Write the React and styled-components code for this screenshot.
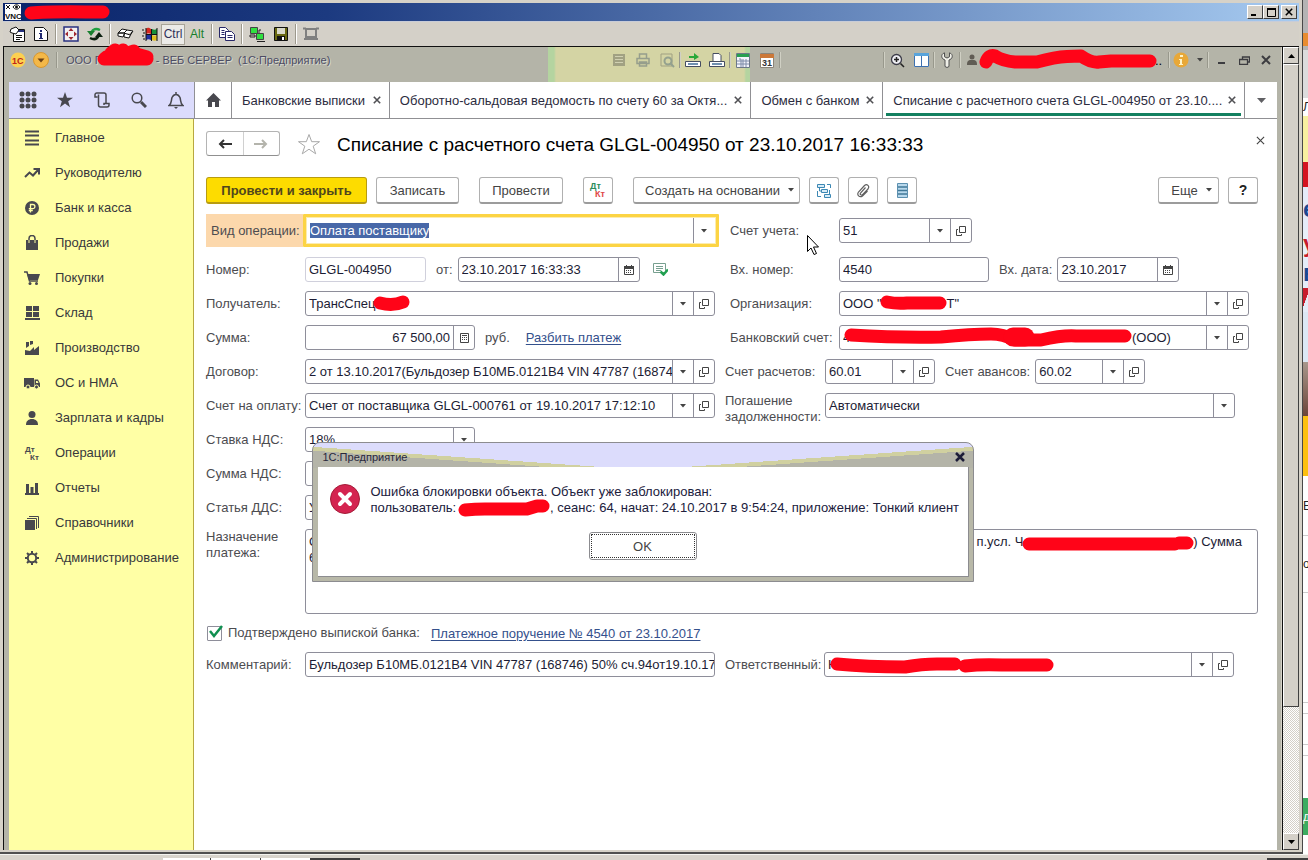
import { useEffect, useRef } from 'react';
import styled, { createGlobalStyle, css } from 'styled-components';

// Estilos globales de la página.
const GlobalStyle = createGlobalStyle`
  * { box-sizing: border-box; }
  body { margin: 0; background: #d4d0c8; }
  body, button, input, select, textarea {
    font-family: "Liberation Sans", Arial, sans-serif;
    font-size: 13px;
  }
  button { padding: 0; cursor: pointer; }
`;

/* ---------- Escritorio y ventana VNC ---------- */

const Desktop = styled.div`
  display: flex;
  flex-direction: column;
  min-height: 100vh;
`;

const DesktopRow = styled.div`
  display: flex;
  flex: 1;
`;

const VncWindow = styled.div`
  flex: 1;
  min-width: 0;
  display: flex;
  flex-direction: column;
  padding: 3px 3px 2px;
  background: #d6d2c8;
  border-right: 1px solid #484848;
  border-bottom: 2px solid #505050;
`;

const VncTitle = styled.div`
  display: flex;
  align-items: center;
  height: 19px;
  padding: 0 2px;
  background: linear-gradient(90deg, #0a246a, #1c3a80 25%, #a6caf0);
  border-bottom: 1px solid #c8ccd8;
`;

const Spacer = styled.div`
  flex: 1;
`;

const ClassicButton = styled.button`
  display: flex;
  align-items: center;
  justify-content: center;
  width: 16px;
  height: 14px;
  margin-left: ${({ $gap }) => ($gap ? '2px' : '0')};
  background: #d4d0c8;
  border: 1px solid;
  border-color: #fff #404040 #404040 #fff;
`;

const VncToolbar = styled.div`
  display: flex;
  align-items: center;
  height: 24px;
  padding-left: 2px;
  background: #d4d0c8;
`;

const VncTool = styled.button`
  display: flex;
  align-items: center;
  justify-content: center;
  width: 24px;
  height: 22px;
  border: 0;
  background: none;
`;

const VncKey = styled.button`
  width: 24px;
  height: 21px;
  font-size: 12px;
  color: ${({ $pressed }) => ($pressed ? '#303058' : '#18802c')};
  background: ${({ $pressed }) => ($pressed ? '#ecebe8' : 'none')};
  border: 1px solid ${({ $pressed }) => ($pressed ? '#a8a498' : 'transparent')};
`;

const VncDivider = styled.span`
  width: 2px;
  height: 20px;
  margin: 0 2px;
  border-left: 1px solid #9c988c;
  border-right: 1px solid #fff;
`;

const VncBody = styled.div`
  flex: 1;
  display: flex;
  border-top: 1px solid #101010;
  border-left: 1px solid #101010;
`;

/* ---------- Ventana 1C ---------- */

const OneC = styled.div`
  position: relative;
  flex: 1;
  min-width: 0;
  display: flex;
  flex-direction: column;
  padding: 0 4px 0 5px;
  background: #b4b4a8;
`;

const OneCTitle = styled.header`
  display: flex;
  align-items: flex-start;
  height: 35px;
  margin-right: -4px;
`;

const TitleLeft = styled.div`
  position: relative;
  display: flex;
  align-items: center;
  height: 26px;
  gap: 7px;
  padding-left: 1px;
`;

const RoundButton = styled.button`
  width: 16px;
  height: 16px;
  border: 0;
  background: none;
`;

const TitleText = styled.span`
  margin-left: 1px;
  font-size: 11px;
  color: #4c4c64;
  white-space: pre;
  text-shadow: 1px 1px 0 #d8d8d0;
`;

const TitleTools = styled.div`
  position: relative;
  display: flex;
  align-items: center;
  width: 733px;
  height: 35px;
  padding: 0 0 9px 59px;
  background: linear-gradient(90deg, #b4d4a0 0 6px, #d4d4a4 8px 196px, #b4d4a0 198px 202px, #b4b4a8 202px);
`;

const TitleTool = styled.button`
  display: flex;
  align-items: center;
  justify-content: center;
  width: ${({ $wide }) => ($wide ? '24px' : '22px')};
  height: 22px;
  border: 0;
  background: none;
  opacity: ${({ $faded }) => ($faded ? 0.35 : 1)};
`;

const TitleDivider = styled.span`
  width: 2px;
  height: 16px;
  border-left: 1px solid #98988c;
  border-right: 1px solid #d0d0c4;
`;

const Blank = styled.span`
  width: ${({ $w }) => $w}px;
`;

const TopRow = styled.div`
  display: flex;
  height: 37px;
  background: #fff;
  border-bottom: 1px solid #909094;
`;

const QuickPanel = styled.div`
  display: flex;
  width: 185px;
  background: #dcdcfc;
`;

const QuickButton = styled.button`
  display: flex;
  align-items: center;
  justify-content: center;
  width: 37px;
  border: 0;
  background: none;
`;

const Tabs = styled.nav`
  flex: 1;
  min-width: 0;
  display: flex;
  border-left: 1px solid #909094;
`;

const Tab = styled.div`
  position: relative;
  flex: 0 1 ${({ $w }) => $w}px;
  min-width: 0;
  display: flex;
  align-items: center;
  padding: 0 6px 0 10px;
  border-right: 1px solid #909094;
  ${({ $active }) =>
    $active &&
    css`
      box-shadow: inset 3px 0 #fff, inset -3px 0 #fff, inset 0 -2px #fff, inset 0 -5px #138060;
    `}
`;

const TabName = styled.button`
  flex: 1;
  min-width: 0;
  overflow: hidden;
  white-space: nowrap;
  text-align: left;
  color: #2c2c40;
  border: 0;
  background: none;
`;

const TabIcon = styled.button`
  display: flex;
  align-items: center;
  justify-content: center;
  flex: 0 0 ${({ $w }) => $w || 12}px;
  border: 0;
  background: none;
`;

const Work = styled.div`
  flex: 1;
  display: flex;
`;

const Sidebar = styled.nav`
  flex: 0 0 185px;
  padding-top: 1px;
  background: #ffffa5;
  border-right: 1px solid #b8a840;
`;

const SideLink = styled.a`
  display: flex;
  align-items: center;
  gap: 13px;
  height: 35px;
  padding-left: 15px;
  color: #38383c;
  text-decoration: none;
`;

const Main = styled.main`
  flex: 1;
  min-width: 0;
  padding: 12px 19px 0 12px;
  background: #fff;
`;

/* ---------- Encabezado y botones del documento ---------- */

const Heading = styled.div`
  display: flex;
  align-items: center;
  height: 25px;
  margin-bottom: 21px;
`;

const NavPair = styled.div`
  display: flex;
  width: 74px;
  height: 25px;
  border: 1px solid #b4b4b4;
  border-bottom-color: #909090;
  border-radius: 3px;
`;

const NavButton = styled.button`
  flex: 1;
  display: flex;
  align-items: center;
  justify-content: center;
  border: 0;
  background: none;
  & + & { border-left: 1px solid #d0d0d0; }
`;

const StarButton = styled.button`
  display: flex;
  margin: 0 16px 0 17px;
  border: 0;
  background: none;
`;

const Title = styled.h1`
  flex: 1;
  margin: 2px 0 0;
  font-size: 19px;
  font-weight: 400;
  line-height: 22px;
  color: #000;
  white-space: nowrap;
`;

const CloseForm = styled.button`
  display: flex;
  width: 9px;
  margin: 0 -7px 6px 0;
  border: 0;
  background: none;
`;

const Actions = styled.div`
  display: flex;
  gap: 9px;
  margin-bottom: 10px;
`;

const Action = styled.button`
  display: flex;
  align-items: center;
  justify-content: center;
  gap: 8px;
  width: ${({ $w }) => $w}px;
  height: 27px;
  margin-right: ${({ $apart }) => ($apart ? '11px' : '0')};
  padding-left: ${({ $menu }) => ($menu ? '6px' : '0')};
  color: #444;
  white-space: nowrap;
  background: #fff;
  border: 1px solid #b0b0b0;
  border-bottom: 2px solid #9c9c9c;
  border-radius: 3px;
  ${({ $primary }) =>
    $primary &&
    css`
      font-weight: 700;
      color: #50461c;
      background: #fddc00;
      border-color: #b89c10;
    `}
`;

const HelpAction = styled(Action)`
  font-weight: 700;
  font-size: 14px;
  color: #222;
`;

/* ---------- Formulario ---------- */

const Columns = styled.div`
  display: grid;
  grid-template-columns: minmax(0, 509fr) minmax(0, 543fr);
`;

const Column = styled.div`
  display: flex;
  flex-direction: column;
  gap: 9px;
  padding-left: ${({ $right }) => ($right ? '10px' : '0')};
`;

const Row = styled.div`
  display: flex;
  align-items: ${({ $top }) => ($top ? 'flex-start' : 'center')};
  height: ${({ $tall }) => ($tall ? '34px' : '25px')};
  padding-left: ${({ $inset }) => ($inset ? '5px' : '0')};
  ${({ $tall }) => $tall && 'padding-bottom: 1px;'}
`;

const Label = styled.label`
  flex: 0 0 ${({ $w }) => $w || 99}px;
  color: #4c4c50;
  line-height: 16px;
  white-space: nowrap;
`;

const HotLabel = styled(Label)`
  flex-basis: 97px;
  height: 33px;
  padding-left: 5px;
  line-height: 33px;
  background: #fcd8ac;
`;

const InlineLabel = styled(Label)`
  flex: 0 0 auto;
  margin: 0 5px 0 10px;
`;

const Box = styled.div`
  position: relative;
  flex: 0 1 ${({ $w }) => $w || 410}px;
  min-width: 0;
  display: flex;
  height: 25px;
  background: #fff;
  border: 1px solid ${({ $soft }) => ($soft ? '#d0d0dc' : '#8e8e9a')};
  border-radius: 3px;
`;

const FocusBox = styled(Box)`
  flex: 1 0 auto;
  height: 33px;
  margin-right: -4px;
  padding: 1px 2px 1px 1px;
  border: 3px solid #fcd444;
  border-radius: 1px;
  box-shadow: inset 0 0 0 1px #fcecb0;
`;

const Input = styled.input`
  flex: 1;
  width: 0;
  min-width: 0;
  padding: ${({ $right }) => ($right ? '0 3px' : '0 0 0 3px')};
  color: #1c1c34;
  text-align: ${({ $right }) => ($right ? 'right' : 'left')};
  border: 0;
  outline: 0;
  background: none;
  &::selection { color: #fff; background: #4868a8; }
`;

const Select = styled.select`
  flex: 1;
  min-width: 0;
  padding: 0 3px;
  color: #1c1c34;
  border: 0;
  outline: 0;
  appearance: none;
  background: none;
`;

const Side = styled.button`
  flex: 0 0 21px;
  display: flex;
  align-items: center;
  justify-content: center;
  border: 0;
  border-left: 1px solid #8e8e9a;
  background: none;
`;

const Units = styled.span`
  margin: 0 16px 0 10px;
  color: #4c4c50;
`;

const Link = styled.a`
  color: #34508c;
  text-decoration: underline;
  text-underline-offset: 2px;
  white-space: nowrap;
`;

const PlainIcon = styled.button`
  display: flex;
  margin-left: 13px;
  border: 0;
  background: none;
`;

const Purpose = styled.div`
  position: relative;
  display: flex;
  align-items: flex-start;
  margin-top: 9px;
`;

const PurposeLabel = styled(Label)`
  white-space: normal;
`;

const TextArea = styled.textarea`
  flex: 1;
  min-width: 0;
  height: 85px;
  padding: 4px 3px;
  line-height: 16px;
  color: #1c1c34;
  white-space: pre;
  overflow: hidden;
  resize: none;
  border: 1px solid #8e8e9a;
  border-radius: 3px;
  outline: 0;
`;

const Confirm = styled.div`
  display: flex;
  align-items: center;
  height: 16px;
  margin: 11px 0;
`;

const CheckBox = styled.input`
  flex: 0 0 15px;
  height: 15px;
  margin: 0 6px 0 1px;
  appearance: none;
  background: #fff;
  border: 1px solid #8e8e9a;
  border-radius: 1px;
`;

const CheckHost = styled.span`
  position: relative;
  display: flex;
  svg { position: absolute; left: 2px; top: -2px; pointer-events: none; }
`;

const ConfirmLabel = styled(Label)`
  flex: 0 0 auto;
  margin-right: 11px;
`;

/* Trazo rojo de marcador que tapa los datos privados. */
const Mark = styled.svg`
  position: absolute;
  left: ${({ $x }) => $x}px;
  top: ${({ $y }) => $y}px;
  overflow: visible;
  pointer-events: none;
`;

/* Puntero del ratón que flota sobre el formulario. */
const Cursor = styled.svg`
  position: absolute;
  left: 77px;
  top: 12px;
  pointer-events: none;
`;

const CursorHost = styled.div`
  position: relative;
  display: flex;
`;

/* ---------- Ventana de error ---------- */

const Dialog = styled.section`
  position: absolute;
  left: 50%;
  top: 395px;
  width: 662px;
  transform: translateX(-50%);
  padding: 0 4px 4px 5px;
  background:
    linear-gradient(176deg, transparent 0 56%, #d0d0a0 56% 64%, #b4b4a8 64%) right top / 50% 25px no-repeat,
    linear-gradient(184deg, transparent 0 56%, #d0d0a0 56% 64%, #b4b4a8 64%) left top / 50% 25px no-repeat,
    linear-gradient(#dcdcfc 0 25px, #b8b8a8 25px);
  border: 1px solid #8c8c90;
  border-radius: 8px 8px 0 0;
`;

const DialogTitle = styled.div`
  display: flex;
  align-items: center;
  justify-content: space-between;
  height: 24px;
  padding: 3px 4px 0 5px;
  font-size: 11px;
  color: #28283c;
`;

const DialogBody = styled.div`
  display: flex;
  flex-direction: column;
  align-items: center;
  height: 110px;
  background: #fff;
  border-right: 1px solid #8c8c90;
  border-bottom: 1px solid #8c8c90;
`;

const Message = styled.div`
  align-self: stretch;
  display: flex;
  gap: 11px;
  margin: 17px 0 16px 12px;
`;

const MessageText = styled.p`
  position: relative;
  margin: 0;
  line-height: 16px;
  color: #20203c;
  white-space: pre;
`;

const OkButton = styled.button`
  width: 108px;
  height: 28px;
  color: #444;
  background: #fff;
  border: 1px solid #8c8c90;
  border-radius: 3px;
  outline: 1px dotted #333;
  outline-offset: -3px;
`;

const CloseDialog = styled.button`
  display: flex;
  border: 0;
  background: none;
`;

/* ---------- Barra de desplazamiento ---------- */

const Scroll = styled.div`
  display: flex;
  flex-direction: column;
  width: 17px;
  margin-left: 1px;
  border-left: 1px solid #101010;
  background: repeating-conic-gradient(#fff 0 25%, #d4d0c8 0 50%) 0 0 / 2px 2px;
`;

const ScrollButton = styled(ClassicButton)`
  height: 17px;
`;

const ScrollThumb = styled.div`
  flex: ${({ $rest }) => ($rest ? '127 1 0' : '643 1 0')};
  ${({ $rest }) =>
    !$rest &&
    css`
      background: #d4d0c8;
      border: 1px solid;
      border-color: #fff #404040 #404040 #fff;
    `}
`;

/* Franja de la página que asoma detrás de la ventana. */
const Behind = styled.aside`
  flex: 0 0 5px;
  display: flex;
  flex-direction: column;
  overflow: hidden;
  background: #fff;
`;

const Strip = styled.div`
  flex: 0 0 ${({ $h }) => $h}px;
  display: flex;
  align-items: center;
  overflow: hidden;
  font-size: ${({ $big }) => ($big ? '24px' : '12px')};
  font-weight: ${({ $big }) => ($big ? 700 : 400)};
  line-height: 1;
  color: ${({ $ink }) => $ink || '#222'};
  background: ${({ $bg }) => $bg || '#fff'};
  border-bottom: ${({ $line }) => ($line ? '1px solid #ccc' : '0')};
`;

const Taskbar = styled.footer`
  display: flex;
  height: 6px;
  padding-top: 3px;
  background: #d8d4cc;
  border-top: 1px solid #f4f4f0;
`;

const TaskPiece = styled.span`
  width: ${({ $w }) => $w}px;
  border-right: 1px solid #404040;
  background: ${({ $dark }) => ($dark ? '#404040' : '#fff')};
`;

/* ---------- Iconos ---------- */

const Svg = ({ w = 16, h = w, box, children, ...rest }) => (
  <svg width={w} height={h} viewBox={box || `0 0 ${w} ${h}`} fill="none" aria-hidden="true" {...rest}>
    {children}
  </svg>
);

const Caret = ({ color = '#444' }) => (
  <Svg w={6} h={4}><path d="M0 0h6L3 3.500z" fill={color} /></Svg>
);

const Cross = ({ size = 8, color = '#505054', weight = 2 }) => (
  <Svg w={size} box="0 0 8 8">
    <path d="M.8.8l6.4 6.4M7.2.8L.8 7.2" stroke={color} strokeWidth={weight} />
  </Svg>
);

const OpenIcon = () => (
  <Svg w={10}>
    <path d="M3.500.5h6v6h-6zM2 3.500H.5v6h5V8" stroke="#444" />
  </Svg>
);

const CalendarIcon = () => (
  <Svg w={10}>
    <path d="M.5 1.500h9v8h-9z" stroke="#444" />
    <path d="M0 1h10v3H0z" fill="#444" />
    <path d="M2 0h1v2H2zM7 0h1v2H7zM2 5h1v1H2zM4 5h1v1H4zM6 5h1v1H6zM2 7h1v1H2zM4 7h1v1H4zM6 7h1v1H6z" fill="#444" />
  </Svg>
);

const CalcIcon = () => (
  <Svg w={9} h={10}>
    <path d="M.5.5h8v9h-8zM2 2.500h5" stroke="#444" />
    <path d="M2 4h1v1H2zM4 4h1v1H4zM6 4h1v1H6zM2 6h1v1H2zM4 6h1v1H4zM6 6h1v1H6z" fill="#444" />
  </Svg>
);

const Scribble = ({ x, y, d, weight = 13 }) => (
  <Mark $x={x} $y={y} width="10" height="10" aria-hidden="true">
    <path d={d} fill="none" stroke="#ff0418" strokeWidth={weight} strokeLinecap="round" strokeLinejoin="round" />
  </Mark>
);

const DtKt = ({ dt = '#2c8c5c', kt = '#e04848', w = 18 }) => (
  <Svg w={w} h={18}>
    <text x="1" y="8" fontSize="9" fontWeight="700" fill={dt}>Дт</text>
    <text x="6" y="16" fontSize="9" fontWeight="700" fill={kt}>Кт</text>
  </Svg>
);

const dark = '#48484e';

const sideItems = [
  ['Главное', <path key="i" d="M1 1.500h14M1 5.500h14M1 10.500h14M1 14.500h14" stroke={dark} strokeWidth="2" />],
  ['Руководителю', <path key="i" d="M1 12l4.500-4.500 3.500 3L14 5M9.500 4H15v5.500" stroke={dark} strokeWidth="2" />],
  ['Банк и касса', (
    <g key="i">
      <circle cx="8" cy="8" r="7" fill={dark} />
      <path d="M6.500 12.500V4.500h2.300a2 2 0 0 1 0 4.200H4.800M4.800 10.500h4" stroke="#ffffa5" strokeWidth="1.300" />
    </g>
  )],
  ['Продажи', (
    <g key="i">
      <path d="M2 5h12v10H2z" fill={dark} />
      <path d="M5 8V3.500a3 3 0 0 1 6 0V8" stroke={dark} strokeWidth="1.500" />
      <path d="M5 5v3M11 5v3" stroke="#ffffa5" />
    </g>
  )],
  ['Покупки', (
    <g key="i">
      <path d="M0 2h3l2.500 9H14" stroke={dark} strokeWidth="1.500" />
      <path d="M3 4h13l-2 6H5z" fill={dark} />
      <circle cx="6" cy="13.500" r="1.500" fill={dark} />
      <circle cx="12.500" cy="13.500" r="1.500" fill={dark} />
    </g>
  )],
  ['Склад', <path key="i" d="M2 1h6v5H2zM9 1h6v5H9zM2 7h6v5H2zM9 7h6v5H9zM1 13h15v2H1z" fill={dark} />],
  ['Производство', <path key="i" d="M1 15v-5l5 1 4-4v3l5-4v9zM2 2h3v4l-3 2zM6 1h3v3L6 5z" fill={dark} />],
  ['ОС и НМА', (
    <g key="i">
      <path d="M0 3h10v9H0zM10.500 4.500H14l2 4V12h-5.500z" fill={dark} />
      <path d="M12 6h1.500l1 2H12z" fill="#ffffa5" />
      <circle cx="4" cy="12" r="2" fill={dark} stroke="#ffffa5" />
      <circle cx="12.500" cy="12" r="2" fill={dark} stroke="#ffffa5" />
    </g>
  )],
  ['Зарплата и кадры', (
    <g key="i" fill={dark}>
      <circle cx="8" cy="4.500" r="3.500" />
      <path d="M2 15c0-4 2-5 4.500-6h3c2.500 1 4.500 2 4.500 6z" />
    </g>
  )],
  ['Операции', (
    <g key="i" fill={dark} fontSize="8" fontWeight="700">
      <text x="1" y="7">Дт</text>
      <text x="6" y="15">Кт</text>
    </g>
  )],
  ['Отчеты', <path key="i" d="M1 13h14v2H1zM2 4h3v9H2zM6.500 7h3v6h-3zM11 3h3v10h-3z" fill={dark} />],
  ['Справочники', (
    <g key="i">
      <path d="M1 5h10v10H1z" fill={dark} />
      <path d="M3 3.500h9.500V14M5 1.500h9.500V13" stroke={dark} />
    </g>
  )],
  ['Администрирование', (
    <g key="i" stroke={dark}>
      <circle cx="8" cy="8" r="4.200" strokeWidth="2" />
      <path d="M8 1v3M8 12v3M1 8h3M12 8h3M3 3l2 2M11 11l2 2M13 3l-2 2M5 11l-2 2" strokeWidth="2" />
    </g>
  )],
];

const tabs = [
  ['Банковские выписки', 158],
  ['Оборотно-сальдовая ведомость по счету 60 за Октя...', 362],
  ['Обмен с банком', 132],
  ['Списание с расчетного счета GLGL-004950 от 23.10....', 362, true],
];

/* ---------- Campos ---------- */

// Campo de texto con botones laterales opcionales.
const Field = ({ id, value, w, right, soft, list, open, calendar, calc, children }) => (
  <Box $w={w} $soft={soft}>
    <Input id={id} defaultValue={value} $right={right} />
    {list && <Side type="button" aria-label="Выбрать"><Caret /></Side>}
    {calendar && <Side type="button" aria-label="Календарь"><CalendarIcon /></Side>}
    {calc && <Side type="button" aria-label="Калькулятор"><CalcIcon /></Side>}
    {open && <Side type="button" aria-label="Открыть"><OpenIcon /></Side>}
    {children}
  </Box>
);

const Choice = ({ id, value, w }) => (
  <Box $w={w}>
    <Select id={id} defaultValue={value}>
      <option>{value}</option>
    </Select>
    <Side type="button" aria-label="Выбрать"><Caret /></Side>
  </Box>
);

const VncBar = () => (
  <>
    <VncTitle>
      <Svg w={16}>
        <path d="M0 0h16v16H0z" fill="#fff" />
        <path d="M1 1l4 4M5 1L1 5M8 3c2-3 5-3 7 0-2 3-5 3-7 0z" stroke="#111" />
        <circle cx="11.500" cy="3" r="1.500" fill="#111" />
        <text x="0" y="15" fontSize="8" fontWeight="700" fill="#111">VNC</text>
      </Svg>
      <CursorHost>
        <Scribble x={10} y={0} weight={13} d="M0 1C20 -1 50 0 72 0" />
      </CursorHost>
      <Spacer />
      <ClassicButton type="button" aria-label="Свернуть">
        <Svg w={8}><path d="M0 6h5v2H0z" fill="#000" /></Svg>
      </ClassicButton>
      <ClassicButton type="button" aria-label="Развернуть">
        <Svg w={9}><path d="M.5 1h8v7.500h-8z" stroke="#000" /><path d="M0 0h9v2H0z" fill="#000" /></Svg>
      </ClassicButton>
      <ClassicButton type="button" aria-label="Закрыть" $gap>
        <Cross color="#000" weight={1.5} />
      </ClassicButton>
    </VncTitle>
    <VncToolbar>
      <VncTool type="button" aria-label="Свойства">
        <Svg w={16}>
          <path d="M4.500 3.500h11v12h-11z" fill="#fff" stroke="#111" />
          <path d="M5 4h10v2H5z" fill="#24307c" />
          <path d="M1 6l1-3 5-2 3 3-3 4-4-1z" fill="#fff" stroke="#111" />
          <path d="M7 9.500h6M7 11.500h6M7 13.500h4" stroke="#111" />
        </Svg>
      </VncTool>
      <VncTool type="button" aria-label="Информация">
        <Svg w={16}>
          <path d="M1.500 1.500h9l4 4v9h-13z" fill="#fff" stroke="#111" />
          <path d="M7 4h2v2H7zM6 7h3v5h1v1H6v-1h1V8H6z" fill="#202870" />
        </Svg>
      </VncTool>
      <VncDivider />
      <VncTool type="button" aria-label="Во весь экран">
        <Svg w={16}>
          <path d="M1 1h14v14H1z" fill="#f4f0f0" stroke="#283080" strokeWidth="1.500" />
          <path d="M8 2l2.500 3h-5zM8 14l2.500-3h-5zM2 8l3-2.500v5zM14 8l-3-2.500v5z" fill="#a02830" />
        </Svg>
      </VncTool>
      <VncTool type="button" aria-label="Обновить">
        <Svg w={16}>
          <path d="M13 4C9 2 6 3 4.500 6" stroke="#20a040" strokeWidth="2.500" />
          <path d="M0 5h8l-4 5z" fill="#188030" />
          <path d="M3 12c4 2 7 1 8.500-2" stroke="#0c2010" strokeWidth="2.500" />
          <path d="M16 11H8l4-5z" fill="#0c2010" />
        </Svg>
      </VncTool>
      <VncDivider />
      <VncTool type="button" aria-label="Ctrl-Alt-Del">
        <Svg w={17} h={14}>
          <path d="M1 6l4-4 5 1-3 3zM7 6l3-3 6 1-3 4zM1 6v3l5 1 2-4zM7 7v3l5 1 3-6" fill="#fff" stroke="#111" />
        </Svg>
      </VncTool>
      <VncTool type="button" aria-label="Пуск">
        <Svg w={17} h={16}>
          <path d="M5 3c2-2 3-1 5 0v5c-2-1-3-1-5 0z" fill="#d82820" />
          <path d="M11 3c2 1 3 1 5 0v5c-2 1-3 1-5 0z" fill="#189038" />
          <path d="M5 9c2-1 3-1 5 0v5c-2-1-3-1-5 0z" fill="#2030a0" />
          <path d="M11 9c2 1 3 1 5 0v5c-2 1-3 1-5 0z" fill="#e0c020" />
          <path d="M5 2v13M10.500 3v12M16 2v13M5 8.500h11M1 4h2M2 7h2M1 10h2M2 13h2" stroke="#111" />
        </Svg>
      </VncTool>
      <VncKey type="button" $pressed>Ctrl</VncKey>
      <VncKey type="button">Alt</VncKey>
      <VncDivider />
      <VncTool type="button" aria-label="Копировать">
        <Svg w={17} h={16}>
          <path d="M.5 1.500h6l3 3v7h-9z" fill="#fff" stroke="#282868" />
          <path d="M2.500 4.500h3M2.500 6.500h3M2.500 8.500h3" stroke="#282868" />
          <path d="M6.500 5.500h6l3 3v6h-9z" fill="#fff" stroke="#282868" />
          <path d="M8.500 9.500h5M8.500 11.500h5" stroke="#282868" />
        </Svg>
      </VncTool>
      <VncDivider />
      <VncTool type="button" aria-label="Передача файлов">
        <Svg w={16}>
          <path d="M1.500 1.500h7v6h-7zM7.500 7.500h7v6h-7z" fill="#30e040" stroke="#444" />
          <path d="M1 9h5v2H1zM12 4h-2v3M8 15.500h8" stroke="#222" />
        </Svg>
      </VncTool>
      <VncTool type="button" aria-label="Сохранить">
        <Svg w={14}>
          <path d="M.5.5h13v13H.5z" fill="#686810" stroke="#111" />
          <path d="M3 1h8v6H3z" fill="#d8d8c8" />
          <path d="M3 9h8v5H3z" fill="#111" />
          <path d="M8 10h2v3H8z" fill="#fff" />
        </Svg>
      </VncTool>
      <VncDivider />
      <VncTool type="button" aria-label="Отключить">
        <Svg w={16} h={14}>
          <path d="M3 2h10v8H3zM0 1.500h3M13 1.500h3M1 12h14" stroke="#808080" strokeWidth="2" />
        </Svg>
      </VncTool>
    </VncToolbar>
  </>
);

const OneCBar = () => (
  <OneCTitle>
    <TitleLeft>
      <RoundButton type="button" aria-label="1С">
        <Svg w={16}>
          <circle cx="8" cy="8" r="7.500" fill="#fcd050" />
          <text x="2" y="12" fontSize="9" fontWeight="700" fill="#c02418">1С</text>
        </Svg>
      </RoundButton>
      <RoundButton type="button" aria-label="Главное меню">
        <Svg w={16}>
          <circle cx="8" cy="8" r="7.500" fill="#f4b848" stroke="#d89830" />
          <path d="M4.500 6.500h7L8 10.500z" fill="#6c4014" />
        </Svg>
      </RoundButton>
      <TitleDivider />
      <TitleText>{'ООО Г' + ' '.repeat(18) + '- ВЕБ СЕРВЕР  (1С:Предприятие)'}</TitleText>
      <Scribble x={88} y={9} weight={13} d="M7 3h43M8 2C14-4 34-2 40-2M14-3l4-3M22-3l4-3M31-3l6-2M36-3l14 4" />
    </TitleLeft>
    <Spacer />
    <TitleTools>
      <TitleTool type="button" aria-label="Сохранить" $wide $faded>
        <Svg w={14}><path d="M1 1h12v12H1z" fill="#444" /><path d="M3 3.500h8M3 6.500h8M3 9.500h8" stroke="#ccc" /></Svg>
      </TitleTool>
      <TitleTool type="button" aria-label="Печать" $wide $faded>
        <Svg w={14}><path d="M3.500 5V1h7v4M1 5.500h12v5H1zM3.500 9h7v4h-7z" stroke="#243c60" strokeWidth="1.500" /></Svg>
      </TitleTool>
      <TitleTool type="button" aria-label="Просмотр" $wide $faded>
        <Svg w={15}><path d="M1 1h11v12H1z" stroke="#444" /><circle cx="8" cy="8" r="3.500" stroke="#204468" strokeWidth="2" /><path d="M10 10l4 4" stroke="#204468" strokeWidth="2" /></Svg>
      </TitleTool>
      <TitleDivider />
      <TitleTool type="button" aria-label="Перейти по ссылке" $wide>
        <Svg w={16}><path d="M4 4h5V1l5 4-5 3V6H4z" fill="#28a838" /><path d="M.5 9.500h15v5H.5z" fill="#fff" stroke="#444c60" /><path d="M3 12h10" stroke="#7090b0" strokeWidth="2" /></Svg>
      </TitleTool>
      <TitleTool type="button" aria-label="Получить ссылку" $wide>
        <Svg w={16}><path d="M4 9V1.500h6l2 2V9" fill="#fff" stroke="#444c60" /><path d="M.5 9.500h15v5H.5z" fill="#fff" stroke="#444c60" /><path d="M3 12h10" stroke="#7090b0" strokeWidth="2" /></Svg>
      </TitleTool>
      <TitleDivider />
      <TitleTool type="button" aria-label="Калькулятор" $wide>
        <Svg w={14} h={15}><path d="M.5.5h13v14H.5z" fill="#f4f4fc" stroke="#6c7888" /><path d="M1 1h12v3H1z" fill="#28a050" /><path d="M3 6h2v8M7 6v8M10 6v8M1 8h12M1 11h12" stroke="#7c8ca8" /></Svg>
      </TitleTool>
      <TitleTool type="button" aria-label="Календарь" $wide>
        <Svg w={14} h={15}><path d="M.5.5h13v14H.5z" fill="#fff" stroke="#8c8478" /><path d="M0 1h14v4H0z" fill="#cc7838" /><text x="2" y="13" fontSize="9" fontWeight="700" fill="#333">31</text></Svg>
      </TitleTool>
      <TitleDivider />
      <Blank $w={102} />
      <TitleDivider />
      <TitleTool type="button" aria-label="Увеличить" $wide>
        <Svg w={15}><circle cx="6.500" cy="6.500" r="5" fill="#f0f0f4" stroke="#3c3c48" strokeWidth="1.300" /><path d="M4 6.500h5M6.500 4v5M10.500 10.500L14 14" stroke="#222" strokeWidth="1.500" /></Svg>
      </TitleTool>
      <TitleTool type="button" aria-label="Панели" $wide>
        <Svg w={15} h={14}><path d="M0 0h15v14H0z" fill="#fff" /><path d="M.5 2v11.500h14V2M7.500 2v12" stroke="#3c70b0" /><path d="M0 0h15v3H0z" fill="#58a4dc" /></Svg>
      </TitleTool>
      <TitleDivider />
      <TitleTool type="button" aria-label="Сервис" $wide>
        <Svg w={12} h={16}>
          <path d="M3.500.8C1.500 1.500.5 3 .8 4.800 1 6.500 2.500 7.500 4 8v6.500l2 1 2-1V8c1.500-.5 3-1.500 3.200-3.200C11.500 3 10.500 1.500 8.500.8v4L6 6 3.500 4.800z" fill="#f0f0e8" stroke="#505050" />
        </Svg>
      </TitleTool>
      <TitleDivider />
      <TitleTool type="button" aria-label="Пользователь">
        <Svg w={10} h={12}><circle cx="5" cy="3" r="2.500" fill="#605c54" /><path d="M0 11c0-5 2-5 5-5s5 0 5 5z" fill="#605c54" /></Svg>
      </TitleTool>
      <Scribble x={431} y={0} d="M7 15Q10 7 16 9Q24 14 36 15H58Q76 10 88 9.500L102 9Q112 16 120 15L132 14H171" />
      <Blank $w={172} />
      <span>..</span>
      <Blank $w={6} />
      <TitleDivider />
      <TitleTool type="button" aria-label="Справка">
        <Svg w={16}><circle cx="8" cy="8" r="7.500" fill="#e8a838" /><path d="M7 3h3v2H7zM6 7h3v5h1v1H6v-1h1V8H6z" fill="#fff4c8" /></Svg>
      </TitleTool>
      <Blank $w={5} />
      <Caret />
      <Blank $w={4} />
      <TitleDivider />
      <Blank $w={2} />
      <TitleTool type="button" aria-label="Свернуть"><Svg w={8}><path d="M0 7h7" stroke="#3c3c40" strokeWidth="2" /></Svg></TitleTool>
      <TitleTool type="button" aria-label="Восстановить">
        <Svg w={11} h={9}><path d="M3.500 4V1h7v5h-2M.500 3.500h8v5h-8z" stroke="#3c3c40" strokeWidth="1.300" /></Svg>
      </TitleTool>
      <TitleTool type="button" aria-label="Закрыть"><Cross size={10} color="#3c3c40" weight={1.6} /></TitleTool>
    </TitleTools>
  </OneCTitle>
);

const TopBar = () => (
  <TopRow>
    <QuickPanel>
      <QuickButton type="button" aria-label="Меню">
        <Svg w={18}>
          {[3, 9, 15].map((y) => [3, 9, 15].map((x) => <circle key={`${x}-${y}`} cx={x} cy={y} r="2.500" fill={dark} />))}
        </Svg>
      </QuickButton>
      <QuickButton type="button" aria-label="Избранное">
        <Svg w={16}><path d="M8 0l2 5.700h6L11.200 9.300 13 15.200 8 11.600 3 15.200 4.800 9.300 0 5.700h6z" fill={dark} /></Svg>
      </QuickButton>
      <QuickButton type="button" aria-label="История">
        <Svg w={16}>
          <path d="M3.500 5H1V3a1.800 1.800 0 0 1 2-2h7a2 2 0 0 1 2 2v8.500M4.500 2.500V13a2 2 0 0 0 2 2h6.500a2 2 0 0 0 2-2v-1.500h-5V13" stroke={dark} strokeWidth="1.500" />
        </Svg>
      </QuickButton>
      <QuickButton type="button" aria-label="Поиск">
        <Svg w={16}><circle cx="6" cy="6" r="4.800" stroke={dark} strokeWidth="1.500" /><path d="M10 10l5 5" stroke={dark} strokeWidth="3" /></Svg>
      </QuickButton>
      <QuickButton type="button" aria-label="Оповещения">
        <Svg w={16} h={17}><path d="M1 13.500c3-2 2-5 3-8 1-2 2-3 4-3s3 1 4 3c1 3 0 6 3 8zM8 0v3" stroke={dark} strokeWidth="1.500" /><path d="M6 15h4l-2 2z" fill={dark} /></Svg>
      </QuickButton>
    </QuickPanel>
    <Tabs aria-label="Открытые окна">
      <Tab as="div" $w={37}>
        <TabIcon type="button" $w={17} aria-label="Начальная страница">
          <Svg w={15} h={14}><path d="M7.500 0L15 7.500h-2V14H9V9H6v5H2V7.500H0z" fill={dark} /></Svg>
        </TabIcon>
      </Tab>
      {tabs.map(([name, w, active]) => (
        <Tab key={name} $w={w} $active={active}>
          <TabName type="button">{name}</TabName>
          <TabIcon type="button" aria-label="Закрыть"><Cross size={8} weight={1.6} /></TabIcon>
        </Tab>
      ))}
      <TabIcon type="button" $w={32} aria-label="Все окна">
        <Svg w={9} h={5}><path d="M0 0h9L4.500 5z" fill="#606064" /></Svg>
      </TabIcon>
    </Tabs>
  </TopRow>
);

const LeftColumn = () => {
  const operation = useRef(null);

  // El primer campo aparece enfocado y con su texto seleccionado.
  useEffect(() => {
    operation.current.focus();
    operation.current.select();
  }, []);

  return (
    <Column>
      <Row $tall>
        <HotLabel htmlFor="operation">Вид операции:</HotLabel>
        <FocusBox>
          <Input id="operation" ref={operation} defaultValue="Оплата поставщику" />
          <Side type="button" aria-label="Выбрать"><Caret /></Side>
        </FocusBox>
      </Row>
      <Row>
        <Label htmlFor="number">Номер:</Label>
        <Field id="number" value="GLGL-004950" w={121} soft />
        <InlineLabel htmlFor="date">от:</InlineLabel>
        <Field id="date" value="23.10.2017 16:33:33" w={182} calendar />
        <PlainIcon type="button" aria-label="Проведен">
          <Svg w={15} h={13}>
            <path d="M.5.5h12v9H.5zM3 3.500h7M3 5.500h7M3 7.500h5" stroke="#78a090" />
            <path d="M7.500 8.500l3 3L15 6.500" stroke="#20a050" strokeWidth="2.500" />
          </Svg>
        </PlainIcon>
      </Row>
      <Row>
        <Label htmlFor="payee">Получатель:</Label>
        <Field id="payee" value="ТрансСпец" list open>
          <Scribble x={74} y={12} d="M0-1c8 2 16 2 23-1" />
        </Field>
      </Row>
      <Row>
        <Label htmlFor="sum">Сумма:</Label>
        <Field id="sum" value="67 500,00" w={170} right calc />
        <Units>руб.</Units>
        <Link href="#split">Разбить платеж</Link>
      </Row>
      <Row>
        <Label htmlFor="contract">Договор:</Label>
        <Field id="contract" value="2 от 13.10.2017(Бульдозер Б10МБ.0121В4 VIN 47787 (168746)" list open />
      </Row>
      <Row>
        <Label htmlFor="invoice">Счет на оплату:</Label>
        <Field id="invoice" value="Счет от поставщика GLGL-000761 от 19.10.2017 17:12:10" list open />
      </Row>
      <Row>
        <Label htmlFor="vat">Ставка НДС:</Label>
        <Choice id="vat" value="18%" w={170} />
      </Row>
      <Row>
        <Label htmlFor="vatSum">Сумма НДС:</Label>
        <Field id="vatSum" value="" w={170} right calc />
      </Row>
      <Row>
        <Label htmlFor="article">Статья ДДС:</Label>
        <Field id="article" value="У" list open />
      </Row>
    </Column>
  );
};

const RightColumn = () => (
  <Column $right>
    <Row $tall $inset>
      <CursorHost>
        <Label htmlFor="account" $w={109}>Счет учета:</Label>
        <Cursor width="13" height="20" viewBox="0 0 13 20" aria-hidden="true">
          <path d="M.5.5v16l3.500-3.500 3 6.500 2.500-1-3-6.500h5z" fill="#fff" stroke="#000" />
        </Cursor>
      </CursorHost>
      <Field id="account" value="51" w={133} list open />
    </Row>
    <Row $inset>
      <Label htmlFor="inNumber" $w={109}>Вх. номер:</Label>
      <Field id="inNumber" value="4540" w={150} />
      <InlineLabel htmlFor="inDate">Вх. дата:</InlineLabel>
      <Field id="inDate" value="23.10.2017" w={122} calendar />
    </Row>
    <Row $inset>
      <Label htmlFor="org" $w={109}>Организация:</Label>
      <Field id="org" value={'ООО "' + ' '.repeat(18) + 'Т"'} list open>
        <Scribble x={47} y={11} d="M0-1q10 2 20 1h33" />
      </Field>
    </Row>
    <Row $inset>
      <Label htmlFor="bank" $w={109}>Банковский счет:</Label>
      <Field id="bank" value={'4' + ' '.repeat(78) + '(ООО)'} list open>
        <Scribble x={11} y={10} d="M0-1Q50 2 90 1Q120-2 140-2Q152-2 164 4L190 4Q212-1 225 0H274" />
        <Scribble x={177} y={12} weight={19} d="M-4-1h12" />
      </Field>
    </Row>
    <Row>
      <Label htmlFor="settle" $w={100}>Счет расчетов:</Label>
      <Field id="settle" value="60.01" w={110} list open />
      <InlineLabel htmlFor="advance">Счет авансов:</InlineLabel>
      <Field id="advance" value="60.02" w={110} list open />
    </Row>
    <Row $top>
      <Label htmlFor="repay" $w={100}>Погашение<br />задолженности:</Label>
      <Choice id="repay" value="Автоматически" />
    </Row>
  </Column>
);

const DocumentForm = () => (
  <Main>
    <Heading>
      <NavPair>
        <NavButton type="button" aria-label="Назад">
          <Svg w={14} h={10}><path d="M2 5h12M6 1L2 5l4 4" stroke="#333" strokeWidth="2" /></Svg>
        </NavButton>
        <NavButton type="button" aria-label="Вперед">
          <Svg w={14} h={10}><path d="M0 5h12M8 1l4 4-4 4" stroke="#b4b4ac" strokeWidth="2" /></Svg>
        </NavButton>
      </NavPair>
      <StarButton type="button" aria-label="В избранное">
        <Svg w={24} h={22}>
          <path d="M12 1.500l2.700 7.200h7.800l-6.300 4.500 2.500 7.600L12 16.200l-6.700 4.600 2.500-7.600L1.500 8.700h7.800z" stroke="#a8a8a8" />
        </Svg>
      </StarButton>
      <Title>Списание с расчетного счета GLGL-004950 от 23.10.2017 16:33:33</Title>
      <CloseForm type="button" aria-label="Закрыть"><Cross size={9} color="#444" weight={1} /></CloseForm>
    </Heading>

    <Actions>
      <Action type="button" $w={161} $primary>Провести и закрыть</Action>
      <Action type="button" $w={83} $apart>Записать</Action>
      <Action type="button" $w={84} $apart>Провести</Action>
      <Action type="button" $w={30} $apart aria-label="Дт Кт"><DtKt /></Action>
      <Action type="button" $w={167} $menu>Создать на основании <Caret /></Action>
      <Action type="button" $w={30} aria-label="Структура подчиненности">
        <Svg w={16} h={15}>
          <path d="M1.500 1.500h7v3h-7zM5.500 6.500h6v3h-6zM8.500 11.500h6v3h-6z" fill="#d8ecf8" stroke="#3c88b4" />
          <path d="M11 1.500h3.500V5M1.500 8v5.500H5M3.500 5v3h2M13.500 7v4" stroke="#3c88b4" />
        </Svg>
      </Action>
      <Action type="button" $w={30} aria-label="Файлы">
        <Svg w={14} h={15}>
          <path d="M9.500 4.500L4.500 10c-1 1.500 1 3 2.300 1.500L12 6c2-3-1-5.500-3.500-3.500L2.500 9c-2 3 1 6 4 4l5-5" stroke="#606060" strokeWidth="1.200" />
        </Svg>
      </Action>
      <Action type="button" $w={30} aria-label="Список">
        <Svg w={11} h={15}>
          <path d="M.5.5h10v14H.5z" fill="#b8d8ec" stroke="#5c90b0" />
          <path d="M1 4h9M1 7.500h9M1 11h9" stroke="#407898" strokeWidth="1.500" />
        </Svg>
      </Action>
      <Spacer />
      <Action type="button" $w={61} $menu>Еще <Caret /></Action>
      <HelpAction type="button" $w={30}>?</HelpAction>
    </Actions>

    <Columns>
      <LeftColumn />
      <RightColumn />
    </Columns>

    <Purpose>
      <PurposeLabel htmlFor="purpose">Назначение платежа:</PurposeLabel>
      <TextArea
        id="purpose"
        defaultValue={'О' + ' '.repeat(182) + 'п.усл. Ч' + ' '.repeat(47) + ') Сумма\n6'}
      />
      <Scribble x={823} y={15} d="M0 0h146M150-1h8" />
    </Purpose>

    <Confirm>
      <CheckHost>
        <CheckBox type="checkbox" id="confirmed" defaultChecked />
        <Svg w={15} h={14}><path d="M2 7l4 5 8-10" stroke="#109050" strokeWidth="2.500" /></Svg>
      </CheckHost>
      <ConfirmLabel htmlFor="confirmed">Подтверждено выпиской банка:</ConfirmLabel>
      <Link href="#order">Платежное поручение № 4540 от 23.10.2017</Link>
    </Confirm>

    <Columns>
      <Row>
        <Label htmlFor="comment">Комментарий:</Label>
        <Field id="comment" value="Бульдозер Б10МБ.0121В4 VIN 47787 (168746) 50% сч.94от19.10.17" />
      </Row>
      <Column $right>
        <Row>
          <Label htmlFor="owner" $w={99}>Ответственный:</Label>
          <Field id="owner" value="К" list open>
            <Scribble x={12} y={12} d="M0-1Q30 2 68 2Q85-1 100-1H118M128 1Q145-1 165 0H210" />
          </Field>
        </Row>
      </Column>
    </Columns>
  </Main>
);

const ErrorDialog = () => (
  <Dialog role="alertdialog" aria-label="1С:Предприятие">
    <DialogTitle>
      <span>1С:Предприятие</span>
      <CloseDialog type="button" aria-label="Закрыть"><Cross size={10} color="#1c1c38" weight={2} /></CloseDialog>
    </DialogTitle>
    <DialogBody>
      <Message>
        <Svg w={30}>
          <circle cx="15" cy="15" r="14.500" fill="#d42450" stroke="#a41c38" />
          <path d="M10 10l10 10M20 10L10 20" stroke="#fff" strokeWidth="4" strokeLinecap="round" />
        </Svg>
        <MessageText>
          {'Ошибка блокировки объекта. Объект уже заблокирован:\n'}
          {'пользователь:' + ' '.repeat(26) + ', сеанс: 64, начат: 24.10.2017 в 9:54:24, приложение: Тонкий клиент'}
          <Scribble x={94} y={25} d="M0 1Q10 0 20 0H62L72-3H78" />
        </MessageText>
      </Message>
      <OkButton type="button">OK</OkButton>
    </DialogBody>
  </Dialog>
);

const App = () => (
  <>
    <GlobalStyle />
    <Desktop>
      <DesktopRow>
        <VncWindow>
          <VncBar />
          <VncBody>
            <OneC>
              <OneCBar />
              <TopBar />
              <Work>
                <Sidebar aria-label="Разделы">
                  {sideItems.map(([name, icon]) => (
                    <SideLink key={name} href="#section">
                      <Svg w={18} h={16}>{icon}</Svg>
                      {name}
                    </SideLink>
                  ))}
                </Sidebar>
                <DocumentForm />
              </Work>
              <ErrorDialog />
            </OneC>
            <Scroll>
              <ScrollButton type="button" aria-label="Вверх"><Svg w={7} h={4}><path d="M0 4h7L3.500 0z" fill="#000" /></Svg></ScrollButton>
              <ScrollThumb />
              <ScrollThumb $rest />
              <ScrollButton type="button" aria-label="Вниз"><Svg w={7} h={4}><path d="M0 0h7L3.500 4z" fill="#000" /></Svg></ScrollButton>
            </Scroll>
          </VncBody>
        </VncWindow>
        <Behind aria-hidden="true">
          <Strip $h={33} $bg="#b4b4b4" />
          <Strip $h={13} $bg="#e88c30" />
          <Strip $h={4} $bg="#b4b4b4" />
          <Strip $h={48} $bg="#dcdcdc" />
          <Strip $h={18}>Л</Strip>
          <Strip $h={46} $bg="#f8f0a0" />
          <Strip $h={25} $bg="#d41420" />
          <Strip $h={43} $big $ink="#1c4890" $bg="#e4ecf8">е</Strip>
          <Strip $h={28} $big $ink="#c81c2c" $bg="#e8f0f8">у</Strip>
          <Strip $h={30} $big $ink="#1c4890" $bg="#e4ecf8">в</Strip>
          <Strip $h={24} $bg="linear-gradient(110deg, #c81c2c 50%, #e4ecf8 52%)" />
          <Strip $h={50} $bg="#dce8f4" />
          <Strip $h={54} $bg="linear-gradient(#a8988c, #6c4438)" />
          <Strip $h={60} $bg="#fcc010" />
          <Strip $h={60} $line>Е</Strip>
          <Strip $h={57} $line>о</Strip>
          <Strip $h={110} $line />
          <Strip $h={11} $line />
          <Strip $h={31} $line />
          <Strip $h={11} $line />
          <Strip $h={42} />
          <Strip $h={37} $bg="#3cac60" $ink="#fff">д</Strip>
        </Behind>
      </DesktopRow>
      <Taskbar>
        <Blank $w={163} />
        <TaskPiece $w={48} />
        <TaskPiece $w={50} />
        <TaskPiece $w={50} />
        <TaskPiece $w={49} $dark />
        <Spacer />
        <TaskPiece $w={41} $dark />
      </Taskbar>
    </Desktop>
  </>
);

export default App;
